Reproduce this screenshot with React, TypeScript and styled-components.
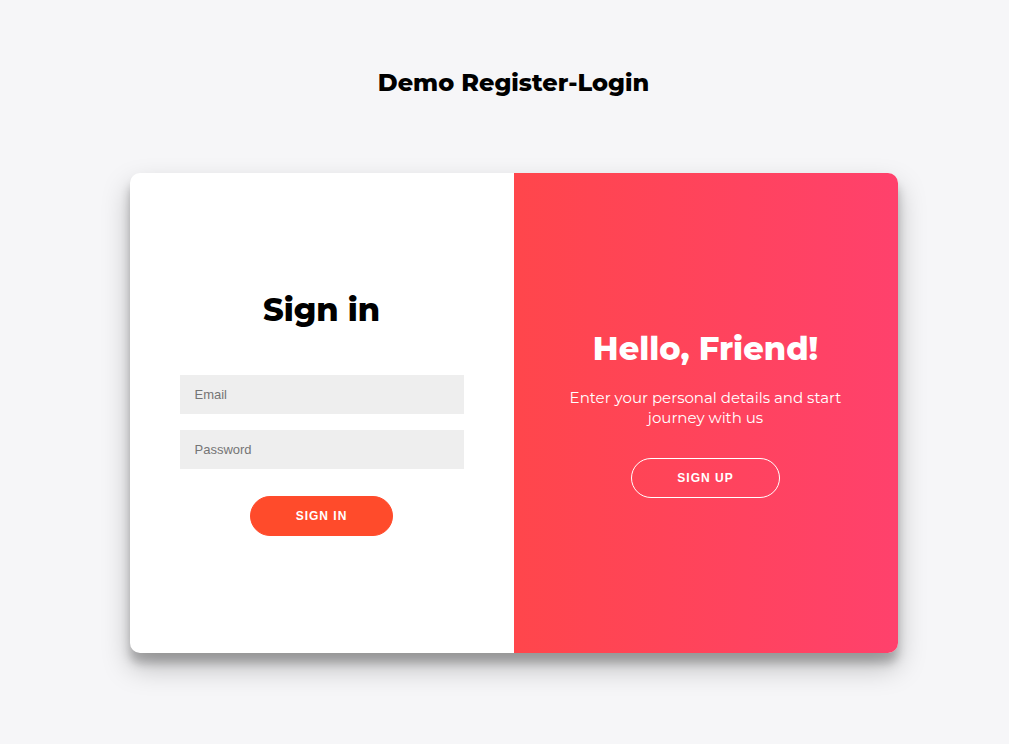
import React from 'react';
import styled, { createGlobalStyle } from 'styled-components';

const GlobalStyle = createGlobalStyle`
  * { box-sizing: border-box; }
  body {
    margin: 0;
    background: #f6f6f8;
    color: #000;
    font-family: Montserrat, Inter, sans-serif;
  }
`;

const Page = styled.main`
  min-height: 100vh;
  padding: 68px 16px 48px 34px;
  display: flex;
  flex-direction: column;
  align-items: center;
`;

const PageTitle = styled.h2`
  margin: 0 0 75px;
  font-size: 24px;
  line-height: 30px;
  font-weight: 800;
  text-align: center;
`;

const Card = styled.div`
  display: grid;
  grid-template-columns: 1fr 1fr;
  width: 100%;
  max-width: 768px;
  min-height: 480px;
  border-radius: 10px;
  overflow: hidden;
  background: #fff;
  box-shadow: 0 14px 28px rgba(0, 0, 0, 0.25), 0 10px 10px rgba(0, 0, 0, 0.22);
`;

const SignInForm = styled.form`
  display: flex;
  flex-direction: column;
  align-items: center;
  justify-content: center;
  padding: 0 50px;
`;

const Heading = styled.h1<{ $gap: number }>`
  margin: 0 0 ${(p) => p.$gap}px;
  font-size: 32px;
  line-height: 40px;
  font-weight: 800;
`;

const Field = styled.input`
  width: 100%;
  height: 39px;
  margin-bottom: 16px;
  padding: 12px 15px;
  border: none;
  background: #eee;
  font-family: 'Liberation Sans', Arial, sans-serif;
  font-size: 13px;
  &::placeholder { color: #757575; }
`;

const Button = styled.button<{ $ghost?: boolean }>`
  height: 40px;
  padding: 0 45px;
  border: 1px solid ${(p) => (p.$ghost ? '#fff' : '#ff4b2b')};
  border-radius: 20px;
  background: ${(p) => (p.$ghost ? 'transparent' : '#ff4b2b')};
  color: #fff;
  font-family: 'Liberation Sans', Arial, sans-serif;
  font-size: 12px;
  font-weight: 700;
  letter-spacing: 1px;
  text-transform: uppercase;
  cursor: pointer;
`;

const SubmitRow = styled.div`
  padding-top: 11px;
`;

const Welcome = styled.section`
  display: flex;
  flex-direction: column;
  align-items: center;
  justify-content: center;
  padding: 0 40px;
  background: linear-gradient(to right, #ff4b2b -100%, #ff416c 100%);
  color: #fff;
  text-align: center;
`;

const Message = styled.p`
  margin: 0 0 30px;
  font-size: 15px;
  line-height: 20px;
`;

export default function App() {
  return (
    <>
      <GlobalStyle />
      <Page>
        <PageTitle>Demo Register-Login</PageTitle>
        <Card>
          <SignInForm onSubmit={(e) => e.preventDefault()}>
            <Heading $gap={45}>Sign in</Heading>
            <Field type="email" placeholder="Email" aria-label="Email" />
            <Field type="password" placeholder="Password" aria-label="Password" />
            <SubmitRow>
              <Button type="submit">Sign In</Button>
            </SubmitRow>
          </SignInForm>
          <Welcome>
            <Heading $gap={19}>Hello, Friend!</Heading>
            <Message>Enter your personal details and start journey with us</Message>
            <Button $ghost type="button">Sign Up</Button>
          </Welcome>
        </Card>
      </Page>
    </>
  );
}
